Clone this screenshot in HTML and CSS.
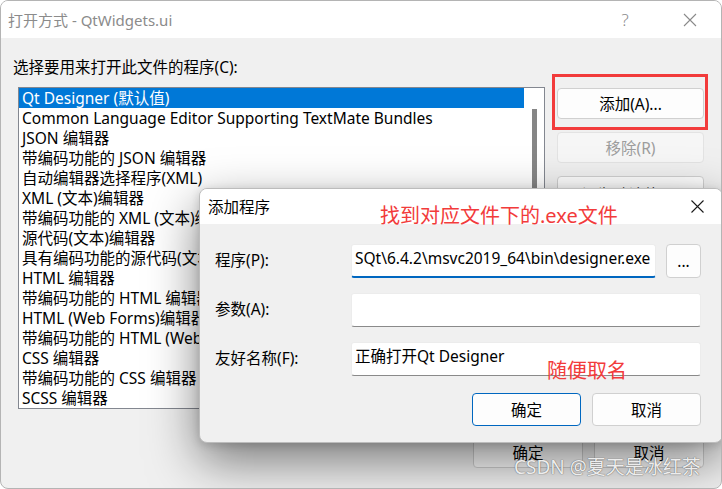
FILE: index.html
```html
<!DOCTYPE html>
<html lang="zh-CN">
<head>
    <meta charset="UTF-8">
    <title>打开方式 - QtWidgets.ui</title>
    <link rel="stylesheet" href="styles.css">
</head>
<body>
    <div class="window">
        <div class="titlebar">
            <span class="title">打开方式 - QtWidgets.ui</span>
            <span class="caption-btn help">?</span>
            <span class="caption-btn close">
                <svg width="14" height="14" viewBox="0 0 14 14"><path d="M1 1L13 13M13 1L1 13" stroke="#8a8a8a" stroke-width="1.1" fill="none"/></svg>
            </span>
        </div>

        <div class="content">
            <div class="prompt">选择要用来打开此文件的程序(C):</div>
            <div class="main">
                <div class="list">
                    <div class="items">
                        <div class="item selected">Qt Designer (默认值)</div>
                        <div class="item">Common Language Editor Supporting TextMate Bundles</div>
                        <div class="item">JSON 编辑器</div>
                        <div class="item">带编码功能的 JSON 编辑器</div>
                        <div class="item">自动编辑器选择程序(XML)</div>
                        <div class="item">XML (文本)编辑器</div>
                        <div class="item">带编码功能的 XML (文本)编辑器</div>
                        <div class="item">源代码(文本)编辑器</div>
                        <div class="item">具有编码功能的源代码(文本)编辑器</div>
                        <div class="item">HTML 编辑器</div>
                        <div class="item">带编码功能的 HTML 编辑器</div>
                        <div class="item">HTML (Web Forms)编辑器</div>
                        <div class="item">带编码功能的 HTML (Web Forms)编辑器</div>
                        <div class="item">CSS 编辑器</div>
                        <div class="item">带编码功能的 CSS 编辑器</div>
                        <div class="item">SCSS 编辑器</div>
                    </div>
                    <div class="scroll"><div class="thumb"></div></div>
                </div>
                <div class="side">
                    <div class="marked"><button class="btn">添加(A)...</button></div>
                    <button class="btn" disabled>移除(R)</button>
                    <button class="btn low">设为默认值(D)</button>
                </div>
            </div>
            <div class="footer">
                <button class="btn wide">确定</button>
                <button class="btn wide">取消</button>
            </div>
        </div>

        <!-- 添加程序 dialog on top -->
        <div class="dialog">
            <div class="dialog-title">
                <span class="title-text">添加程序</span>
                <svg class="dialog-close" width="13" height="13" viewBox="0 0 13 13"><path d="M0.5 0.5L12.5 12.5M12.5 0.5L0.5 12.5" stroke="#1a1a1a" stroke-width="1.1" fill="none"/></svg>
            </div>
            <div class="dialog-body">
                <div class="form">
                    <label class="label">程序(P):</label>
                    <div class="field-row">
                        <div class="field focused">SQt\6.4.2\msvc2019_64\bin\designer.exe</div>
                        <button class="btn browse">...</button>
                    </div>
                    <label class="label">参数(A):</label>
                    <div class="field"></div>
                    <label class="label">友好名称(F):</label>
                    <div class="field">正确打开Qt Designer</div>
                </div>
                <div class="dialog-footer">
                    <button class="btn default">确定</button>
                    <button class="btn">取消</button>
                </div>
            </div>
            <div class="note note-exe">找到对应文件下的.exe文件</div>
            <div class="note note-name">随便取名</div>
        </div>

        <div class="watermark">CSDN @夏天是冰红茶</div>
    </div>
</body>
</html>
```

FILE: styles.css
```css
* {
    box-sizing: border-box;
}

body {
    margin: 0;
    background: #ffffff;
    color: #000;
    font-family: "Noto Sans", "Noto Sans CJK SC", sans-serif;
    font-size: 15.5px;
    line-height: 20px;
    overflow: hidden;
}

.window {
    position: relative;
    width: 722px;
    height: 489px;
    border: 1px solid #b4b4b4;
    border-radius: 8px;
    background: #f0f0f0;
    overflow: hidden;
    display: flex;
    flex-direction: column;
}

.titlebar {
    height: 37px;
    background: #fff;
    display: flex;
    align-items: center;
    padding-left: 7px;
    padding-right: 8px;
}

.title {
    flex: 1;
    font-size: 15px;
    color: #8b8b8b;
}

.caption-btn {
    width: 46px;
    display: flex;
    justify-content: center;
    color: #8b8b8b;
}

.help {
    font-size: 17px;
    font-weight: 300;
    margin-right: 19px;
}

.content {
    flex: 1;
    padding: 19px 17px 0 12px;
}

.prompt {
    height: 20px;
}

.main {
    display: flex;
    gap: 12px;
    margin-top: 10px;
    margin-left: 5px;
}

.list {
    width: 528px;
    height: 322px;
    border: 1px solid #838790;
    background: #fff;
    display: flex;
    overflow: hidden;
}

.items {
    width: 505px;
}

.item {
    height: 20px;
    line-height: 20px;
    padding-left: 3px;
    white-space: nowrap;
}

.item.selected {
    background: #0078d7;
    color: #fff;
}

.scroll {
    flex: 1;
    padding: 21px 0 0 8px;
}

.thumb {
    width: 5px;
    height: 170px;
    background: #868686;
}

.side {
    width: 147px;
    margin-top: 1px;
    display: flex;
    flex-direction: column;
    gap: 13px;
}

.btn {
    height: 31px;
    border: 1px solid #d0d0d0;
    border-radius: 4px;
    background: #fdfdfd;
    font: inherit;
    color: #000;
    padding: 0;
}

.side .btn {
    width: 147px;
}

.side .btn.low {
    padding-top: 7px;
}

.btn:disabled {
    color: #9d9d9d;
    background: #f6f6f6;
    border-color: #e3e3e3;
}

.marked {
    position: relative;
}

.marked::after {
    content: "";
    position: absolute;
    top: -14px;
    bottom: -11px;
    left: -5px;
    right: -4px;
    border: 3px solid #f23b3b;
}

.footer {
    display: flex;
    justify-content: flex-end;
    gap: 11px;
    margin-top: 28px;
}

.footer .btn {
    width: 110px;
}

/* dialog */
.dialog {
    position: absolute;
    left: 198px;
    top: 187px;
    width: 524px;
    border: 1px solid #bcbcbc;
    border-radius: 8px;
    background: #f0f0f0;
    box-shadow: 0 18px 50px rgba(0, 0, 0, 0.5), 0 2px 10px rgba(0, 0, 0, 0.15);
    overflow: hidden;
}

.dialog-title {
    height: 35px;
    background: #fff;
    display: flex;
    align-items: center;
    padding-left: 8px;
}

.title-text {
    flex: 1;
}

.dialog-close {
    margin-right: 18px;
}

.dialog-body {
    padding: 20px 21px 16px 15px;
}

.form {
    display: grid;
    grid-template-columns: 136px 1fr;
    row-gap: 15px;
    align-items: center;
}

.label {
    padding-bottom: 2px;
}

.field-row {
    display: flex;
    gap: 10px;
}

.field {
    flex: 1;
    height: 34px;
    padding: 3px 3px 0;
    background: #fff;
    border: 1px solid #ececec;
    border-bottom: 1px solid #8a8a8a;
    border-radius: 3px;
    white-space: nowrap;
    overflow: hidden;
}

.field.focused {
    border-bottom: 2px solid #0067c0;
}

.browse {
    width: 35px;
    height: 34px;
}

.dialog-footer {
    display: flex;
    justify-content: flex-end;
    gap: 11px;
    margin-top: 17px;
}

.dialog-footer .btn {
    width: 109px;
    height: 33px;
}

.btn.default {
    border-color: #0067c0;
}

.note {
    position: absolute;
    color: #f23b3b;
    font-size: 20px;
    line-height: 20px;
}

.note-exe {
    left: 180px;
    top: 17px;
}

.note-name {
    left: 347px;
    top: 172px;
}

.watermark {
    position: absolute;
    left: 513px;
    top: 456px;
    font-size: 19px;
    line-height: 20px;
    color: rgba(255, 255, 255, 0.88);
    text-shadow: 0 0 1px #6e6e6e, 0 0 1px #6e6e6e;
}
```
